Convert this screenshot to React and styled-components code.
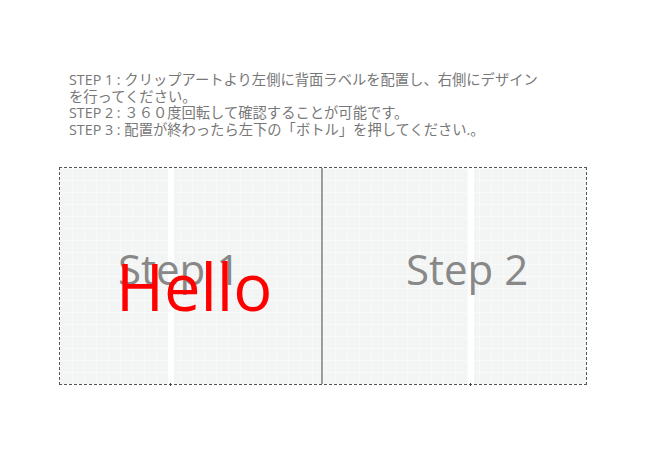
import React from 'react'
import styled, { createGlobalStyle } from 'styled-components'

const GlobalStyle = createGlobalStyle`
    html, body {
        margin: 0;
        padding: 0;
        background: #ffffff;
    }
`

const steps = [
    'STEP 1 : クリップアートより左側に背面ラベルを配置し、右側にデザインを行ってください。',
    'STEP 2 : ３６０度回転して確認することが可能です。',
    'STEP 3 : 配置が終わったら左下の「ボトル」を押してください.。'
]

export default function App() {
    return (
        <Page>
            <GlobalStyle />
            <Instructions>
                {steps.map(step => (
                    <Line key={step}>{step}</Line>
                ))}
            </Instructions>
            <Canvas>
                <Panel>
                    <Seam $left={108} />
                    <StepLabel $left={58}>Step 1</StepLabel>
                    <Hello>Hello</Hello>
                </Panel>
                <Divider />
                <Panel>
                    <Seam $left={145} />
                    <StepLabel $left={83}>Step 2</StepLabel>
                </Panel>
            </Canvas>
        </Page>
    )
}

const Page = styled.div`
    width: 650px;
    height: 450px;
    box-sizing: border-box;
    padding: 72px 0 0 59px;
`

const Instructions = styled.div`
    width: 475px;
    margin-left: 10px;
    font-family: "Open Sans", "Noto Sans CJK JP", sans-serif;
    font-size: 14.3px;
    line-height: 16.7px;
    color: #777777;
`

const Line = styled.div`
`

const Canvas = styled.div`
    margin-top: 28px;
    width: 528px;
    height: 218px;
    box-sizing: border-box;
    border: 1px dashed #555555;
    display: grid;
    grid-template-columns: 261px 2px 1fr;
`

const Panel = styled.div`
    position: relative;
    background-color: #f3f5f4;
    background-image:
        linear-gradient(to right, rgba(255, 255, 255, 0.45) 1px, transparent 1px),
        linear-gradient(to bottom, rgba(255, 255, 255, 0.45) 1px, transparent 1px);
    background-size: 12px 12px;
`

const Divider = styled.div`
    background: #9a9a9a;
`

const Seam = styled.div`
    position: absolute;
    top: 0;
    bottom: 0;
    left: ${props => props.$left}px;
    width: 6px;
    background: #ffffff;

    &::after {
        content: '';
        position: absolute;
        left: 2px;
        bottom: -2px;
        width: 1px;
        height: 3px;
        background: #444444;
    }
`

const StepLabel = styled.div`
    position: absolute;
    top: 80px;
    left: ${props => props.$left}px;
    font-family: "Open Sans", sans-serif;
    font-size: 42px;
    line-height: 42px;
    color: #888888;
    white-space: nowrap;
`

const Hello = styled.div`
    position: absolute;
    top: 86px;
    left: 56px;
    font-family: "Open Sans", sans-serif;
    font-size: 65px;
    line-height: 65px;
    color: #ff0000;
    white-space: nowrap;
`
